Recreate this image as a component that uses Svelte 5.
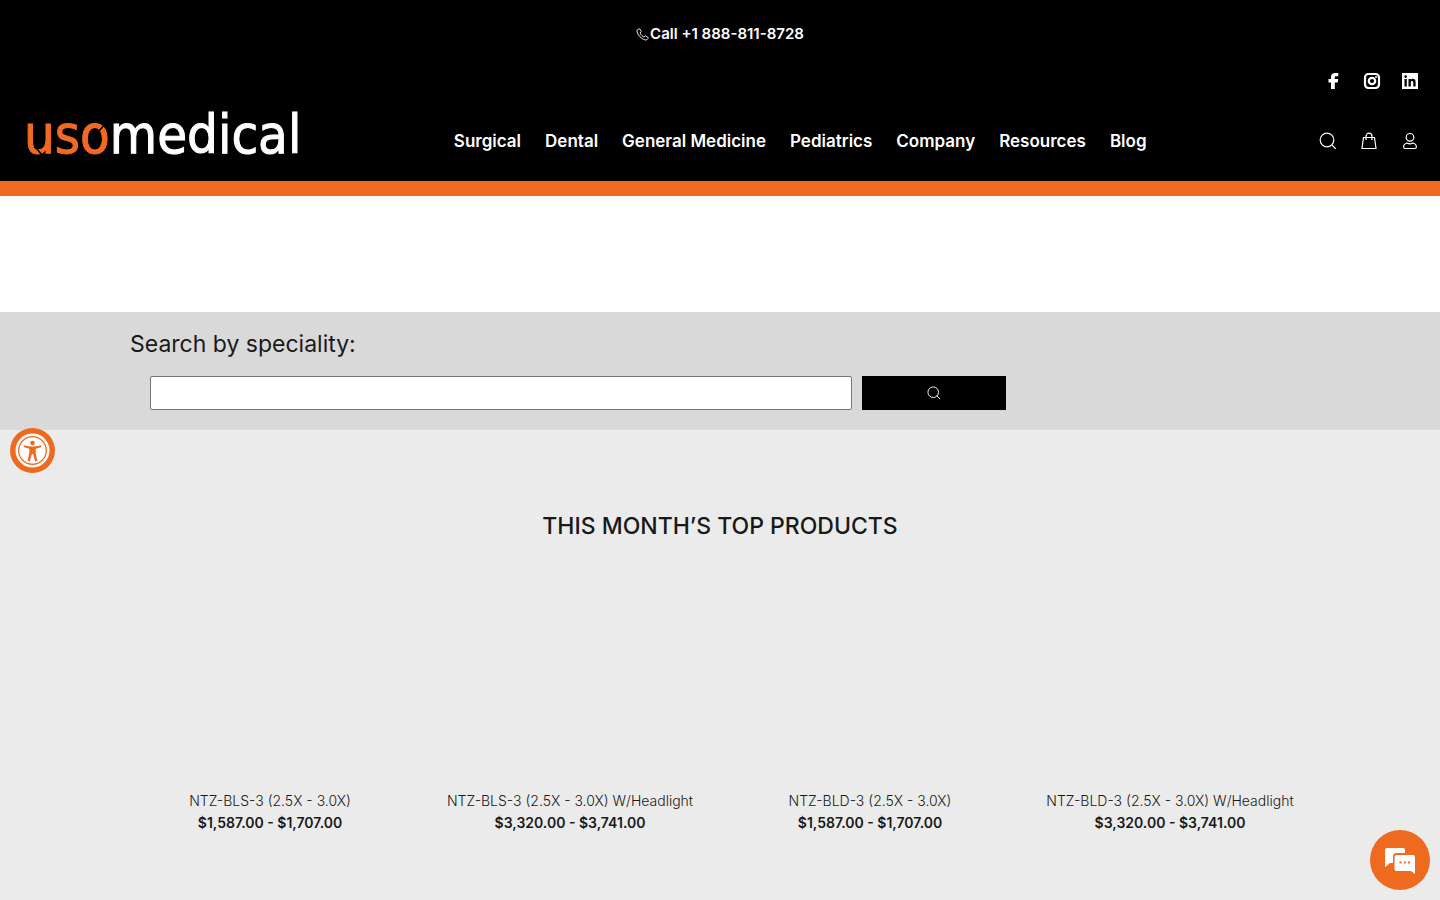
<script lang="ts">
  const navItems = ["Surgical", "Dental", "General Medicine", "Pediatrics", "Company", "Resources", "Blog"];

  const products = [
    { title: "NTZ-BLS-3 (2.5X - 3.0X)", price: "$1,587.00 - $1,707.00" },
    { title: "NTZ-BLS-3 (2.5X - 3.0X) W/Headlight", price: "$3,320.00 - $3,741.00" },
    { title: "NTZ-BLD-3 (2.5X - 3.0X)", price: "$1,587.00 - $1,707.00" },
    { title: "NTZ-BLD-3 (2.5X - 3.0X) W/Headlight", price: "$3,320.00 - $3,741.00" },
  ];

  let query = $state("");
</script>

{#snippet searchIcon(size: number)}
  <svg width={size} height={size} viewBox="0 0 18 18" fill="none" stroke="currentColor" stroke-width="1.2" aria-hidden="true">
    <circle cx="8" cy="8" r="6.8" />
    <path d="M12.8 12.8l4 4" />
  </svg>
{/snippet}

<div class="page">
  <header class="header">
    <div class="call">
      <a href="tel:+18888118728">
        <svg width="13" height="13" viewBox="0 0 13 13" fill="none" stroke="currentColor" stroke-width="0.9" aria-hidden="true">
          <path d="M3 .8L1.2 2C.4 3.6 2 6.700 4 8.800s5.200 3.800 6.800 3l1.400-1.500c.2-.3.1-.6-.2-.9L9.800 8c-.3-.2-.6-.2-.9.1l-.9 1C6.800 8.800 4.300 6.200 4 5l1-.9c.3-.3.3-.6.100-.9L3.900 1c-.2-.3-.6-.4-.9-.2z" />
        </svg>
        <span>Call +1 888-811-8728</span>
      </a>
    </div>

    <div class="social">
      <a href="#facebook" aria-label="Facebook">
        <svg width="18" height="18" viewBox="0 0 18 18" fill="currentColor">
          <path d="M6 17V10.500H3.500V7H6V5C6 2.400 7.500 1 10 1h3.300v3.200h-2C10.100 4.200 9.800 4.600 9.800 5.400V7h3.400l-.5 3.500H9.800V17z" />
        </svg>
      </a>
      <a href="#instagram" aria-label="Instagram">
        <svg width="18" height="18" viewBox="0 0 18 18" fill="none" stroke="currentColor" stroke-width="2.200">
          <rect x="2" y="2" width="14" height="14" rx="3.500" />
          <circle cx="9" cy="9" r="3.200" />
          <circle cx="13" cy="5" r="1" fill="currentColor" stroke="none" />
        </svg>
      </a>
      <a href="#linkedin" aria-label="LinkedIn">
        <svg width="18" height="18" viewBox="0 0 18 18" fill="currentColor" fill-rule="evenodd">
          <path d="M1 1h16v16H1zM3.500 7v7.500h2.300V7zM3.300 4.600a1.350 1.350 0 1 0 2.700 0a1.350 1.350 0 1 0-2.700 0zM7.500 7v7.500h2.300v-4c0-1 .5-1.600 1.300-1.600s1.200.5 1.200 1.600v4h2.300v-4.500c0-2-1-3.200-2.700-3.200-1 0-1.700.5-2.100 1.200V7z" />
        </svg>
      </a>
    </div>

    <div class="bar">
      <a class="logo" href="/" aria-label="usomedical">
        <span class="uso">uso</span><span>medical</span>
        <svg class="cuts" viewBox="0 0 84 50" fill="none" stroke="#000" stroke-width="1.500" aria-hidden="true">
          <path d="M10 37c4 2 6 5 9 10M75 21l7-8" />
        </svg>
      </a>

      <nav class="nav">
        {#each navItems as item}
          <a href="#{item.toLowerCase().replace(' ', '-')}">{item}</a>
        {/each}
      </nav>

      <div class="tools">
        <button aria-label="Search">{@render searchIcon(18)}</button>
        <button aria-label="Cart">
          <svg width="18" height="18" viewBox="0 0 18 18" fill="none" stroke="currentColor" stroke-width="1.200">
            <path d="M3.500 5.500h11L16 16.500H2zM6 8V4.200a3 3 0 0 1 6 0V8" />
          </svg>
        </button>
        <button aria-label="Account">
          <svg width="18" height="18" viewBox="0 0 18 18" fill="none" stroke="currentColor" stroke-width="1.200">
            <circle cx="9" cy="5.300" r="3.800" />
            <path d="M6 11C3.800 11.600 2.600 13.200 2.600 15c0 1 .6 1.500 1.500 1.500h9.800c.9 0 1.500-.5 1.500-1.500 0-1.800-1.200-3.400-3.400-4-1.800 1-4.200 1-6 0z" />
          </svg>
        </button>
      </div>
    </div>
  </header>

  <section class="search">
    <div class="container">
      <label for="speciality">Search by speciality:</label>
      <form onsubmit={(e) => e.preventDefault()}>
        <input id="speciality" type="text" bind:value={query} />
        <button class="search-btn" aria-label="Search">{@render searchIcon(14)}</button>
      </form>
    </div>
  </section>

  <main class="products">
    <h2>THIS MONTH’S TOP PRODUCTS</h2>
    <div class="grid">
      {#each products as product}
        <article class="card">
          <div class="photo"></div>
          <a href="#product">{product.title}</a>
          <div class="price">{product.price}</div>
        </article>
      {/each}
    </div>
  </main>

  <button class="access" aria-label="Accessibility options">
    <svg width="45" height="45" viewBox="0 0 45 45">
      <circle cx="22.500" cy="22.500" r="22.500" fill="#ee6a1f" />
      <circle cx="22.500" cy="22.500" r="17" fill="#fff" />
      <circle cx="22.500" cy="22.500" r="13.800" fill="none" stroke="#ee6a1f" stroke-width="1.300" />
      <circle cx="22.500" cy="15" r="2.300" fill="#ee6a1f" />
      <path d="M14 17.200c5.500 1.600 11.500 1.600 17 0l.5 1.900-5.800 1.700v4.500l1.600 7.500-2.200.6-2-7.400h-1.200l-2 7.400-2.200-.6 1.600-7.500v-4.500l-5.800-1.700z" fill="#ee6a1f" />
    </svg>
  </button>

  <button class="chat" aria-label="Chat">
    <svg width="32" height="28" viewBox="0 0 32 28">
      <path d="M3 2h16a2 2 0 0 1 2 2v3h-8.500A3.500 3.500 0 0 0 9 10.500V17H6l-4 3.500c-.6.400-1 .2-1-.5V4a2 2 0 0 1 2-2z" fill="#fff" />
      <path d="M12.500 9H29a2 2 0 0 1 2 2v17L27 25H12.500a2 2 0 0 1-2-2V11a2 2 0 0 1 2-2z" fill="#fff" />
      <path d="M15.500 15.500h2v2h-2zM19.800 15.500h2v2h-2zM24 15.500h2v2h-2z" fill="#ee6a1f" />
    </svg>
  </button>
</div>

<style>
  :global(body) {
    margin: 0;
    background: #fff;
    color: #191919;
    font-family: Inter, "Open Sans", sans-serif;
  }

  .page {
    display: flex;
    flex-direction: column;
    min-height: 100vh;
  }

  a {
    color: inherit;
    text-decoration: none;
  }

  button {
    display: flex;
    align-items: center;
    justify-content: center;
    padding: 0;
    border: 0;
    background: none;
    color: inherit;
    cursor: pointer;
  }

  svg {
    display: block;
  }

  .header {
    background: #000;
    color: #fff;
    border-bottom: 15px solid #ee6a1f;
  }

  .call {
    display: flex;
    justify-content: center;
    padding: 24px 0 16px;
    font-size: 15px;
    font-weight: 600;
    line-height: 20px;
  }

  .call a {
    display: flex;
    align-items: center;
    gap: 1px;
  }

  .social {
    display: flex;
    justify-content: flex-end;
    gap: 20px;
    padding: 12px 21px 10px;
  }

  .bar {
    display: flex;
    align-items: center;
    height: 81px;
    padding: 0 21px 0 24px;
  }

  .logo {
    position: relative;
    padding-bottom: 12px;
    font-family: "DejaVu Sans Condensed", "DejaVu Sans", sans-serif;
    font-size: 54px;
    line-height: 60px;
    -webkit-text-stroke: 1px currentColor;
  }

  .uso {
    color: #f26a22;
  }

  .cuts {
    position: absolute;
    left: 0;
    top: 5px;
    width: 84px;
    height: 50px;
  }

  .nav {
    flex: 1;
    display: flex;
    justify-content: center;
    gap: 24px;
    padding-right: 20px;
    font-size: 17px;
    font-weight: 600;
    line-height: 24px;
  }

  .tools {
    display: flex;
    gap: 23px;
  }

  .container {
    box-sizing: border-box;
    max-width: 1200px;
    margin: 0 auto;
    padding: 0 10px;
  }

  .search {
    margin-top: 116px;
    padding: 16px 0 20px;
    background: #d9d9d9;
  }

  .search label {
    display: block;
    font-size: 23px;
    font-weight: 400;
    line-height: 32px;
  }

  .search form {
    display: flex;
    gap: 10px;
    width: 856px;
    max-width: 100%;
    margin: 16px 0 0 20px;
  }

  .search input {
    box-sizing: border-box;
    flex: 1;
    min-width: 0;
    height: 34px;
    border: 1px solid #767676;
    border-radius: 2px;
    background: #fff;
    padding: 0 8px;
    font: inherit;
  }

  .search-btn {
    width: 144px;
    background: #000;
    color: #fff;
  }

  .products {
    flex: 1;
    padding: 80px 0 64px;
    background: #ebebeb;
  }

  h2 {
    margin: 0;
    font-size: 23px;
    font-weight: 500;
    line-height: 32px;
    text-align: center;
  }

  .grid {
    display: grid;
    grid-template-columns: repeat(4, 1fr);
    max-width: 1200px;
    margin: 48px auto 0;
  }

  .card {
    font-size: 14px;
    line-height: 22px;
    text-align: center;
  }

  .photo {
    height: 200px;
  }

  .card a {
    font-weight: 300;
  }

  .price {
    font-weight: 600;
  }

  .access {
    position: fixed;
    left: 10px;
    top: calc(50% - 22px);
    border-radius: 50%;
  }

  .chat {
    position: fixed;
    right: 10px;
    bottom: 10px;
    width: 60px;
    height: 60px;
    border-radius: 50%;
    background: #ee6a1f;
  }
</style>
